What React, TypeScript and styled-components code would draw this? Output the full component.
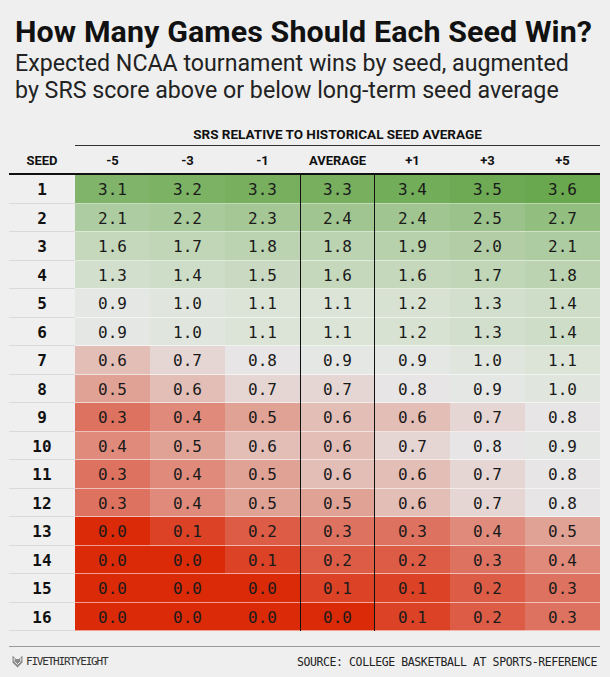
import styled, { createGlobalStyle } from "styled-components";

const GlobalStyle = createGlobalStyle`
  body {
    margin: 0;
    background: #efefef;
  }
`;

const COLUMNS = ["-5", "-3", "-1", "AVERAGE", "+1", "+3", "+5"];

const WINS = [
  [3.1, 3.2, 3.3, 3.3, 3.4, 3.5, 3.6],
  [2.1, 2.2, 2.3, 2.4, 2.4, 2.5, 2.7],
  [1.6, 1.7, 1.8, 1.8, 1.9, 2.0, 2.1],
  [1.3, 1.4, 1.5, 1.6, 1.6, 1.7, 1.8],
  [0.9, 1.0, 1.1, 1.1, 1.2, 1.3, 1.4],
  [0.9, 1.0, 1.1, 1.1, 1.2, 1.3, 1.4],
  [0.6, 0.7, 0.8, 0.9, 0.9, 1.0, 1.1],
  [0.5, 0.6, 0.7, 0.7, 0.8, 0.9, 1.0],
  [0.3, 0.4, 0.5, 0.6, 0.6, 0.7, 0.8],
  [0.4, 0.5, 0.6, 0.6, 0.7, 0.8, 0.9],
  [0.3, 0.4, 0.5, 0.6, 0.6, 0.7, 0.8],
  [0.3, 0.4, 0.5, 0.5, 0.6, 0.7, 0.8],
  [0.0, 0.1, 0.2, 0.3, 0.3, 0.4, 0.5],
  [0.0, 0.0, 0.1, 0.2, 0.2, 0.3, 0.4],
  [0.0, 0.0, 0.0, 0.1, 0.1, 0.2, 0.3],
  [0.0, 0.0, 0.0, 0.0, 0.1, 0.2, 0.3],
];

// red -> grey -> green, stops picked off the original chart
const STOPS: [number, number[]][] = [
  [0.0, [218, 42, 8]],
  [0.1, [219, 66, 38]],
  [0.2, [221, 92, 70]],
  [0.3, [222, 114, 96]],
  [0.4, [223, 138, 123]],
  [0.5, [225, 162, 150]],
  [0.6, [227, 190, 183]],
  [0.7, [229, 214, 211]],
  [0.8, [231, 229, 229]],
  [0.9, [229, 231, 228]],
  [1.0, [224, 230, 221]],
  [1.1, [220, 228, 216]],
  [3.6, [105, 168, 78]],
];

function cellColor(v: number) {
  for (let i = 1; i < STOPS.length; i++) {
    const [x1, c1] = STOPS[i];
    if (v <= x1 + 1e-9) {
      const [x0, c0] = STOPS[i - 1];
      const t = (v - x0) / (x1 - x0);
      const c = c0.map((a, k) => Math.round(a + (c1[k] - a) * t));
      return `rgb(${c.join(",")})`;
    }
  }
  return `rgb(${STOPS[STOPS.length - 1][1].join(",")})`;
}

const Page = styled.div`
  width: 610px;
  height: 677px;
  box-sizing: border-box;
  padding: 0 10px 0 9px;
  background: #efefef;
  color: #111;
  font-family: Roboto, "Liberation Sans", sans-serif;
  overflow: hidden;
`;

const Title = styled.h1`
  margin: 0;
  padding: 15px 0 0 6px;
  font-size: 30.4px;
  line-height: 34px;
  font-weight: 700;
  letter-spacing: 0.1px;
`;

const Subtitle = styled.p`
  margin: 1px 0 0 6px;
  width: 572px;
  font-size: 23.2px;
  line-height: 26.5px;
  font-weight: 400;
  color: #222;
`;

const Chart = styled.div`
  display: grid;
  grid-template-columns: 66px repeat(7, 75px);
  margin-top: 21px;
`;

const SuperHeader = styled.div`
  grid-column: 2 / -1;
  height: 21px;
  line-height: 21px;
  border-bottom: 1px solid #333;
  text-align: center;
  font-size: 13.5px;
  font-weight: 700;
`;

const HeadCell = styled.div`
  height: 27px;
  padding-top: 2px;
  box-sizing: border-box;
  display: flex;
  align-items: center;
  justify-content: center;
  font-size: 13px;
  font-weight: 700;
`;

const Rule = styled.div`
  grid-column: 1 / -1;
  height: 2px;
  background: #111;
`;

const SeedCell = styled.div`
  height: 28.5px;
  box-sizing: border-box;
  padding-top: 1px;
  display: flex;
  align-items: center;
  justify-content: center;
  font-family: "DejaVu Sans Mono", "Liberation Mono", monospace;
  font-size: 16px;
  font-weight: 700;
  box-shadow: inset 0 -1px 0 #dadada;
`;

const ValueCell = styled.div<{ $value: number; $avg?: boolean }>`
  height: 28.5px;
  box-sizing: border-box;
  padding-top: 1px;
  display: flex;
  align-items: center;
  justify-content: center;
  font-family: "DejaVu Sans Mono", "Liberation Mono", monospace;
  font-size: 16px;
  color: #1a1a1a;
  background: ${(p) => cellColor(p.$value)};
  box-shadow: inset 0 -1px 0 rgba(255, 255, 255, 0.55);
  border-left: ${(p) => (p.$avg ? "1px solid #111" : "none")};
  border-right: ${(p) => (p.$avg ? "1px solid #111" : "none")};
`;

const Footer = styled.div`
  margin-top: 15px;
  height: 29px;
  border-top: 1px solid #999;
  display: flex;
  align-items: center;
  justify-content: space-between;
  padding: 0 3px 0 3px;
  font-family: "DejaVu Sans Mono", "Liberation Mono", monospace;
  font-size: 11.5px;
  color: #222;
`;

const Brand = styled.div`
  display: flex;
  align-items: center;
  gap: 3px;
  color: #333;
  letter-spacing: -1.2px;
  font-size: 11px;
`;

const Source = styled.div`
  letter-spacing: -0.4px;
`;

function FoxIcon() {
  return (
    <svg width="11" height="13" viewBox="0 0 11 13">
      <path d="M0.5 0.5 L4 4 L7 4 L10.5 0.5 L10.5 7.5 L5.5 12.5 L0.5 7.5 Z" fill="#8a8a8a" />
      <path d="M2.5 6.5 L5.5 9.5 L8.5 6.5 M2.2 3.2 L2.2 6 M8.8 3.2 L8.8 6" stroke="#efefef" strokeWidth="1" fill="none" />
    </svg>
  );
}

export default function App() {
  return (
    <>
      <GlobalStyle />
      <Page>
        <Title>How Many Games Should Each Seed Win?</Title>
        <Subtitle>
          Expected NCAA tournament wins by seed, augmented by SRS score above or below long-term seed average
        </Subtitle>
        <Chart>
          <SuperHeader>SRS RELATIVE TO HISTORICAL SEED AVERAGE</SuperHeader>
          <HeadCell>SEED</HeadCell>
          {COLUMNS.map((c) => (
            <HeadCell key={c}>{c}</HeadCell>
          ))}
          <Rule />
          {WINS.map((row, i) => (
            <>
              <SeedCell key={`s${i}`}>{i + 1}</SeedCell>
              {row.map((v, j) => (
                <ValueCell key={`${i}-${j}`} $value={v} $avg={j === 3}>
                  {v.toFixed(1)}
                </ValueCell>
              ))}
            </>
          ))}
        </Chart>
        <Footer>
          <Brand>
            <FoxIcon />
            FIVETHIRTYEIGHT
          </Brand>
          <Source>SOURCE: COLLEGE BASKETBALL AT SPORTS-REFERENCE</Source>
        </Footer>
      </Page>
    </>
  );
}
